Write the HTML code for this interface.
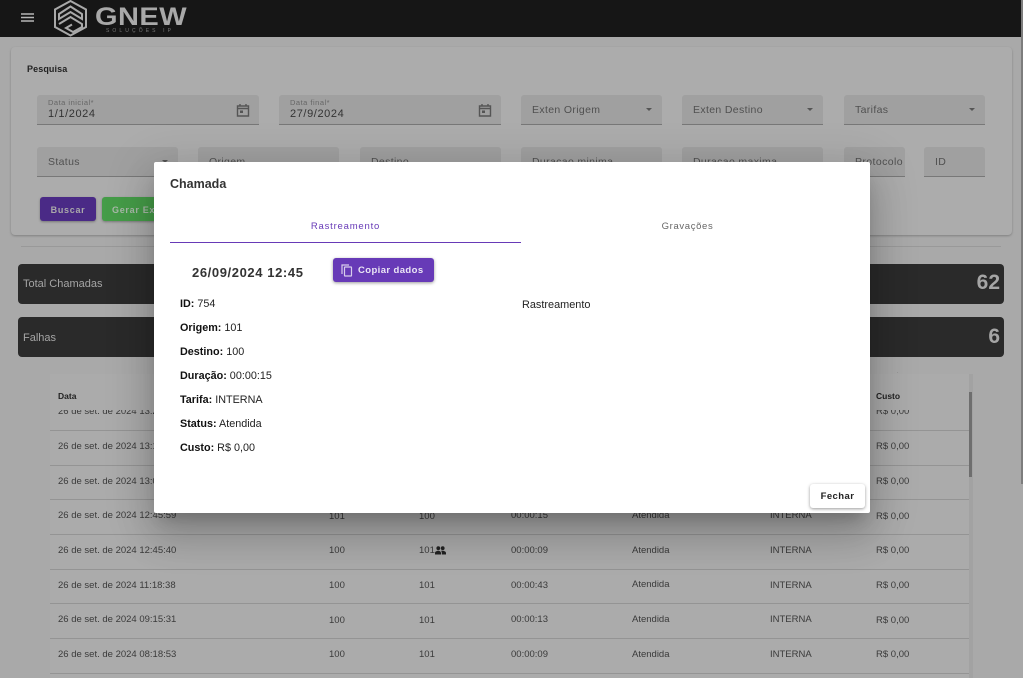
<!DOCTYPE html>
<html lang="pt-BR"><head><meta charset="utf-8"><title>Chamada</title>
<style>
html,body{margin:0;padding:0;width:1023px;height:678px;overflow:hidden;background:#a9a9a9}
body{position:relative;font-family:"Liberation Sans",sans-serif;color:#262626}
.a{position:absolute;white-space:nowrap}
.f{position:absolute;background:#a0a0a0;border-bottom:1px solid #787878;border-radius:3px 3px 0 0;box-sizing:border-box;height:30px;color:#505050;font-size:10.5px;letter-spacing:.35px}
.f span{position:absolute;left:11px;top:9px;white-space:nowrap}
.f i{position:absolute;right:10px;top:13px;width:0;height:0;border-left:3.5px solid transparent;border-right:3.5px solid transparent;border-top:3.5px solid #555}
.cell{position:absolute;font-size:9.5px;color:#3a3a3a;white-space:nowrap;margin-top:1px}
.line{position:absolute;left:50px;width:919px;height:1px;background:#949494}
.row b{font-weight:bold;color:#111}
.row{position:absolute;left:180px;font-size:10.8px;color:#222;white-space:nowrap;margin-top:1px}
</style></head><body>
<div class="a" style="left:0;top:0;width:1023px;height:37px;background:#161616"></div>
<svg class="a" style="left:21px;top:13px" width="14" height="10" viewBox="0 0 14 10"><path d="M0 1h13M0 4.500h13M0 8h13" stroke="#b5b5b5" stroke-width="1.500"/></svg>
<svg class="a" style="left:53px;top:0" width="36" height="37" viewBox="0 0 36 37" fill="none" stroke="#a9a9a9" stroke-width="2"><path d="M17.500 1L33 9.500V27L17.500 35.500L2 27V9.500Z"/><path d="M6 14L17.500 6.500L29 14V19L17.500 12L6 19Z"/><path d="M6 24L17.500 17L29 24V27L20 32L13 28L19 24.500"/></svg>
<div class="a" style="left:95px;top:4px;font-size:25px;font-weight:bold;color:#a9a9a9;letter-spacing:.4px;line-height:27px;transform-origin:0 0;transform:scaleX(1.16)">GNEW</div>
<div class="a" style="left:106px;top:28px;font-size:5px;color:#777;letter-spacing:3.100px;line-height:7px">SOLUÇÕES IP</div>

<div class="a" style="left:11px;top:47px;width:1001px;height:188px;background:#acacac;border-radius:4px;box-shadow:0 1px 2px #808080"></div>
<div class="a" style="left:27px;top:64px;font-size:9px;font-weight:bold;color:#222;letter-spacing:.1px">Pesquisa</div>

<div class="f" style="left:37px;top:95px;width:222px"><span style="top:3px;font-size:7.500px;color:#666;letter-spacing:.5px">Data inicial*</span><span style="top:13px;font-size:11px;color:#333;letter-spacing:.6px">1/1/2024</span></div>
<svg class="a" style="left:236px;top:103px" width="14" height="14" viewBox="0 0 14 14" fill="none"><path d="M1.500 3h11v10h-11zM1.500 5.500h11M4 1v2M10 1v2" stroke="#555" stroke-width="1.400"/><rect x="4" y="7.500" width="3" height="2.500" fill="#555"/></svg>
<div class="f" style="left:279px;top:95px;width:222px"><span style="top:3px;font-size:7.500px;color:#666;letter-spacing:.5px">Data final*</span><span style="top:13px;font-size:11px;color:#333;letter-spacing:.6px">27/9/2024</span></div>
<svg class="a" style="left:478px;top:103px" width="14" height="14" viewBox="0 0 14 14" fill="none"><path d="M1.500 3h11v10h-11zM1.500 5.500h11M4 1v2M10 1v2" stroke="#555" stroke-width="1.400"/><rect x="4" y="7.500" width="3" height="2.500" fill="#555"/></svg>
<div class="f" style="left:521px;top:95px;width:141px"><span>Exten Origem</span><i></i></div>
<div class="f" style="left:682px;top:95px;width:141px"><span>Exten Destino</span><i></i></div>
<div class="f" style="left:844px;top:95px;width:141px"><span>Tarifas</span><i></i></div>

<div class="f" style="left:37px;top:147px;width:141px"><span>Status</span><i></i></div>
<div class="f" style="left:198px;top:147px;width:141px"><span>Origem</span></div>
<div class="f" style="left:360px;top:147px;width:141px"><span>Destino</span></div>
<div class="f" style="left:521px;top:147px;width:141px"><span>Duracao minima</span></div>
<div class="f" style="left:682px;top:147px;width:141px"><span>Duracao maxima</span></div>
<div class="f" style="left:844px;top:147px;width:61px"><span style="letter-spacing:.4px">Protocolo</span></div>
<div class="f" style="left:924px;top:147px;width:61px"><span>ID</span></div>

<div class="a" style="left:40px;top:197px;width:56px;height:24px;border-radius:3px;background:#4a2a86;box-shadow:0 1px 2px #777;color:#aaa;font-size:9px;font-weight:bold;letter-spacing:.7px;line-height:26px;text-align:center">Buscar</div>
<div class="a" style="left:102px;top:197px;width:110px;height:24px;border-radius:3px;background:#459c48;box-shadow:0 1px 2px #777;color:#a9b9a9;font-size:9px;font-weight:bold;letter-spacing:.7px;line-height:26px;text-indent:10px">Gerar Excel</div>

<div class="a" style="left:21px;top:246px;width:980px;height:1px;background:#999"></div>
<div class="a" style="left:18px;top:264px;width:986px;height:40px;background:#2a2a2a;border-radius:4px"></div>
<div class="a" style="left:18px;top:317px;width:986px;height:40px;background:#2a2a2a;border-radius:4px"></div>
<div class="a" style="left:23px;top:278px;font-size:11px;color:#a5a5a5">Total Chamadas</div>
<div class="a" style="left:23px;top:332px;font-size:11px;color:#a5a5a5">Falhas</div>
<div class="a" style="right:23px;top:271px;font-size:21px;font-weight:bold;color:#a5a5a5">62</div>
<div class="a" style="right:23px;top:325px;font-size:21px;font-weight:bold;color:#a5a5a5">6</div>
<div class="a" style="left:1021px;top:0;width:2px;height:484px;background:#7d7d7d"></div>

<div class="a" style="left:50px;top:374px;width:919px;height:304px;background:#ababab"></div>
<div class="a" style="left:969px;top:374px;width:4px;height:304px;background:#a2a2a2"></div>
<div class="a" style="left:969px;top:392px;width:3px;height:85px;background:#6e6e6e"></div>
<div class="a" style="left:50px;top:372px;width:919px;height:3px;overflow:hidden"><div class="cell" style="left:8px;top:-10px">26 de set. de 2024 13:40:12</div><div class="cell" style="left:826px;top:-10px">R$ 0,00</div></div>

<div class="cell" style="left:58px;top:405px">26 de set. de 2024 13:20:10</div>
<div class="cell" style="left:876px;top:405px">R$ 0,00</div>
<div class="a" style="left:50px;top:375px;width:919px;height:35px;background:#ababab"></div>
<div class="cell" style="left:58px;top:390px;font-size:8.500px;font-weight:bold;color:#222">Data</div>
<div class="cell" style="left:876px;top:390px;font-size:8.500px;font-weight:bold;color:#222">Custo</div>

<div class="line" style="top:430px"></div><div class="line" style="top:465px"></div><div class="line" style="top:499px"></div><div class="line" style="top:534px"></div><div class="line" style="top:569px"></div><div class="line" style="top:603px"></div><div class="line" style="top:638px"></div><div class="line" style="top:673px"></div>

<div class="cell" style="left:58px;top:440px">26 de set. de 2024 13:10:22</div><div class="cell" style="left:876px;top:440px">R$ 0,00</div>
<div class="cell" style="left:58px;top:475px">26 de set. de 2024 13:05:41</div><div class="cell" style="left:876px;top:475px">R$ 0,00</div>

<div class="cell" style="left:58px;top:509px">26 de set. de 2024 12:45:59</div><div class="cell" style="left:329px;top:510px">101</div><div class="cell" style="left:419px;top:510px">100</div><div class="cell" style="left:511px;top:509px">00:00:15</div><div class="cell" style="left:632px;top:509px">Atendida</div><div class="cell" style="left:770px;top:509px">INTERNA</div><div class="cell" style="left:876px;top:510px">R$ 0,00</div>

<div class="cell" style="left:58px;top:544px">26 de set. de 2024 12:45:40</div><div class="cell" style="left:329px;top:544px">100</div><div class="cell" style="left:419px;top:544px">101</div><div class="cell" style="left:511px;top:544px">00:00:09</div><div class="cell" style="left:632px;top:544px">Atendida</div><div class="cell" style="left:770px;top:544px">INTERNA</div><div class="cell" style="left:876px;top:544px">R$ 0,00</div>
<svg class="a" style="left:435px;top:546px" width="11" height="9" viewBox="0 0 11 9" fill="#222"><circle cx="3.300" cy="2.200" r="1.900"/><circle cx="7.700" cy="2.200" r="1.900"/><path d="M0 8.500V7c0-1.500 2-2.300 3.300-2.300S6 5.500 6 7v1.500zM6.800 8.500V7c0-1-.3-1.700-1-2.200.6-.1 1.300-.1 1.900-.1 1.300 0 3.300.8 3.300 2.300v1.500z"/></svg>

<div class="cell" style="left:58px;top:579px">26 de set. de 2024 11:18:38</div><div class="cell" style="left:329px;top:579px">100</div><div class="cell" style="left:419px;top:579px">101</div><div class="cell" style="left:511px;top:579px">00:00:43</div><div class="cell" style="left:632px;top:578px">Atendida</div><div class="cell" style="left:770px;top:579px">INTERNA</div><div class="cell" style="left:876px;top:579px">R$ 0,00</div>

<div class="cell" style="left:58px;top:613px">26 de set. de 2024 09:15:31</div><div class="cell" style="left:329px;top:614px">100</div><div class="cell" style="left:419px;top:614px">101</div><div class="cell" style="left:511px;top:613px">00:00:13</div><div class="cell" style="left:632px;top:613px">Atendida</div><div class="cell" style="left:770px;top:613px">INTERNA</div><div class="cell" style="left:876px;top:614px">R$ 0,00</div>

<div class="cell" style="left:58px;top:648px">26 de set. de 2024 08:18:53</div><div class="cell" style="left:329px;top:648px">100</div><div class="cell" style="left:419px;top:648px">101</div><div class="cell" style="left:511px;top:648px">00:00:09</div><div class="cell" style="left:632px;top:648px">Atendida</div><div class="cell" style="left:770px;top:648px">INTERNA</div><div class="cell" style="left:876px;top:648px">R$ 0,00</div>

<div class="a" style="left:154px;top:162px;width:716px;height:351px;background:#fff;border-radius:2px;box-shadow:0 11px 15px -7px rgba(0,0,0,.2),0 24px 38px 3px rgba(0,0,0,.14),0 9px 46px 8px rgba(0,0,0,.12)"></div>
<div class="a" style="left:170px;top:177px;font-size:12.500px;font-weight:bold;color:#333">Chamada</div>
<div class="a" style="left:170px;top:221px;width:351px;text-align:center;font-size:9.500px;color:#673ab7;letter-spacing:.8px">Rastreamento</div>
<div class="a" style="left:522px;top:221px;width:331px;text-align:center;font-size:9.500px;color:#666;letter-spacing:.65px">Gravações</div>
<div class="a" style="left:170px;top:242px;width:351px;height:1px;background:#673ab7"></div>
<div class="a" style="left:192px;top:265px;font-size:13px;font-weight:bold;color:#333;letter-spacing:.6px">26/09/2024 12:45</div>
<div class="a" style="left:333px;top:258px;width:101px;height:24px;background:#673ab7;border-radius:3px;box-shadow:0 1px 3px rgba(0,0,0,.4)"></div>
<svg class="a" style="left:341px;top:264px" width="12" height="13" viewBox="0 0 12 13" fill="none" stroke="#d8cdec" stroke-width="1.200"><path d="M1 10V1h7"/><rect x="3.500" y="3" width="7" height="9" rx=".5"/></svg>
<div class="a" style="left:358px;top:265px;font-size:9.500px;font-weight:bold;color:#ebe6f5;letter-spacing:.4px">Copiar dados</div>
<div class="row" style="top:297px"><b>ID:</b> 754</div>
<div class="row" style="top:321px"><b>Origem:</b> 101</div>
<div class="row" style="top:345px"><b>Destino:</b> 100</div>
<div class="row" style="top:369px"><b>Duração:</b> 00:00:15</div>
<div class="row" style="top:393px"><b>Tarifa:</b> INTERNA</div>
<div class="row" style="top:417px"><b>Status:</b> Atendida</div>
<div class="row" style="top:441px"><b>Custo:</b> R$ 0,00</div>
<div class="a" style="left:522px;top:299px;font-size:10.900px;color:#222">Rastreamento</div>
<div class="a" style="left:810px;top:484px;width:55px;height:24px;background:#fff;border-radius:3px;box-shadow:0 1px 3px rgba(0,0,0,.4);font-size:9.500px;font-weight:bold;color:#222;text-align:center;line-height:25px;letter-spacing:.45px">Fechar</div>
</body></html>
